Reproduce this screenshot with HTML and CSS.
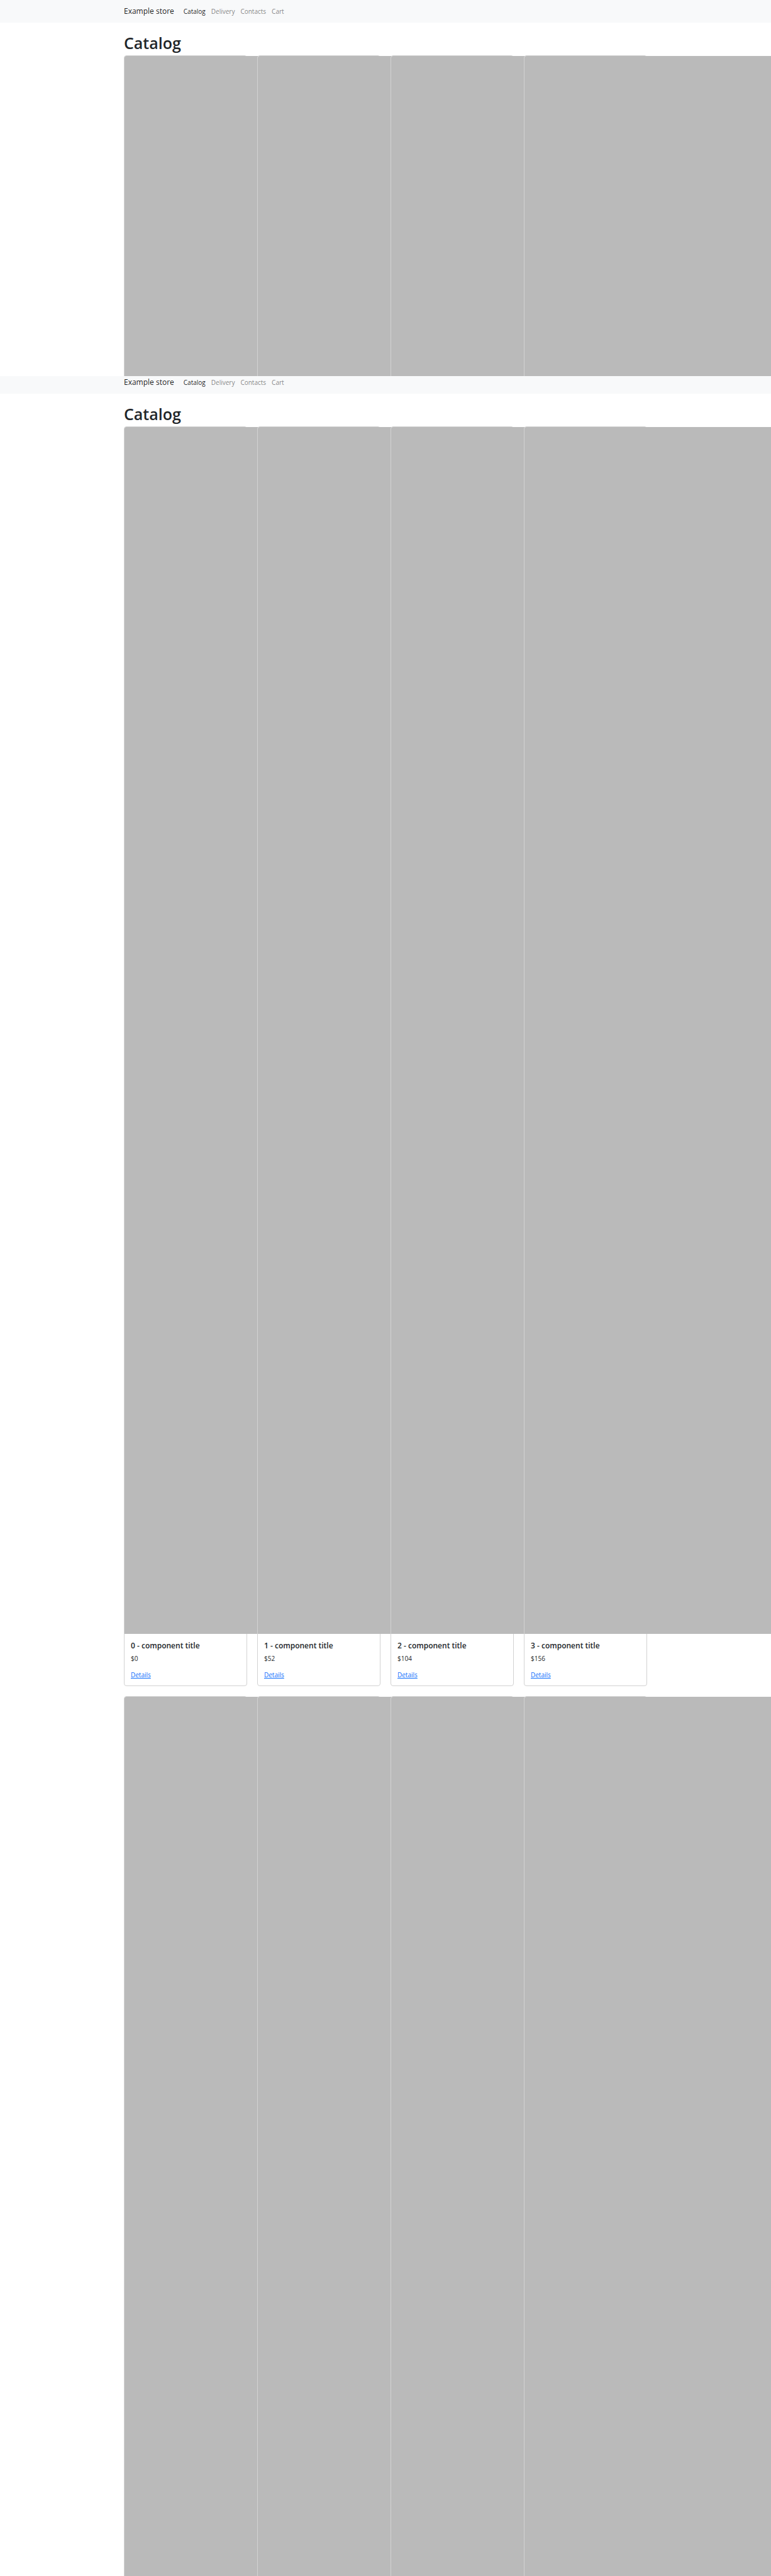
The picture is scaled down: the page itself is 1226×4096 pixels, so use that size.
FILE: index.html
```html
<!DOCTYPE html>
<html lang="en">
<head>
<meta charset="utf-8">
<meta name="viewport" content="width=device-width, initial-scale=1">
<title>Example store - Catalog</title>
<link rel="stylesheet" href="styles.css">
</head>
<body>
<section class="screen screen-short">
  <nav class="navbar">
    <div class="container navbar-row">
      <a class="brand" href="#">Example store</a>
      <a class="nav-link active" href="#">Catalog</a>
      <a class="nav-link" href="#">Delivery</a>
      <a class="nav-link" href="#">Contacts</a>
      <a class="nav-link" href="#">Cart</a>
    </div>
  </nav>
  <main class="container">
    <h1>Catalog</h1>
    <div class="grid">
      <article class="card"><div class="card-img"></div></article>
      <article class="card"><div class="card-img"></div></article>
      <article class="card"><div class="card-img"></div></article>
      <article class="card"><div class="card-img"></div></article>
    </div>
  </main>
</section>
<section class="screen screen-long">
  <nav class="navbar navbar-scrolled">
    <div class="container navbar-row">
      <a class="brand" href="#">Example store</a>
      <a class="nav-link active" href="#">Catalog</a>
      <a class="nav-link" href="#">Delivery</a>
      <a class="nav-link" href="#">Contacts</a>
      <a class="nav-link" href="#">Cart</a>
    </div>
  </nav>
  <div class="container">
    <h1>Catalog</h1>
    <div class="grid">
      <article class="card">
        <div class="card-img"></div>
        <div class="card-body"><h2>0 - component title</h2><p>$0</p><a href="#">Details</a></div>
      </article>
      <article class="card">
        <div class="card-img"></div>
        <div class="card-body"><h2>1 - component title</h2><p>$52</p><a href="#">Details</a></div>
      </article>
      <article class="card">
        <div class="card-img"></div>
        <div class="card-body"><h2>2 - component title</h2><p>$104</p><a href="#">Details</a></div>
      </article>
      <article class="card">
        <div class="card-img"></div>
        <div class="card-body"><h2>3 - component title</h2><p>$156</p><a href="#">Details</a></div>
      </article>
      <article class="card"><div class="card-img"></div></article>
      <article class="card"><div class="card-img"></div></article>
      <article class="card"><div class="card-img"></div></article>
      <article class="card"><div class="card-img"></div></article>
    </div>
  </div>
</section>
</body>
</html>
```

FILE: styles.css
```css
* {
  box-sizing: border-box;
}

body {
  margin: 0;
  height: 100vh;
  display: flex;
  flex-direction: column;
  overflow: hidden;
  background: #fff;
  color: #212529;
  font: 10px/15px "Segoe UI", "Open Sans", "Noto Sans", sans-serif;
}

.screen {
  overflow: hidden;
}

.screen-short {
  flex: 0 0 598px;
}

.screen-long {
  flex: 1 1 0;
  min-height: 0;
}

.container {
  max-width: 832px;
  margin: 0 auto;
}

.navbar {
  padding: 8px 0;
  background: #f8f9fa;
}

.navbar-scrolled {
  padding-top: 0;
}

.navbar-row {
  display: flex;
  align-items: center;
  gap: 9px;
}

.brand {
  margin-right: 6px;
  color: rgba(0, 0, 0, 0.9);
  font-size: 12px;
  line-height: 20px;
  text-decoration: none;
}

.nav-link {
  color: rgba(0, 0, 0, 0.5);
  text-decoration: none;
}

.nav-link.active {
  color: rgba(0, 0, 0, 0.9);
}

h1 {
  margin: 17px 0 4px;
  font-size: 25px;
  line-height: 31px;
  font-weight: 600;
}

.grid {
  display: grid;
  grid-template-columns: repeat(4, minmax(0, 1fr));
  gap: 16px;
}

.card {
  background: #fff;
  border: 1px solid #d2d2d2;
  border-radius: 4px;
}

/* Product pictures keep their natural size and run past the card edge. */
.card-img {
  width: 1235px;
  height: 1919px;
  border-top-left-radius: 3px;
  background: #bababa;
}

.card-body {
  padding: 11px 10px 9px;
}

h2 {
  margin: 0 0 5px;
  font-size: 12px;
  line-height: 16px;
  font-weight: 600;
}

p {
  margin: 0 0 10px;
}

.card-body a {
  display: block;
  width: fit-content;
  line-height: 16px;
  color: #0d6efd;
}
```
